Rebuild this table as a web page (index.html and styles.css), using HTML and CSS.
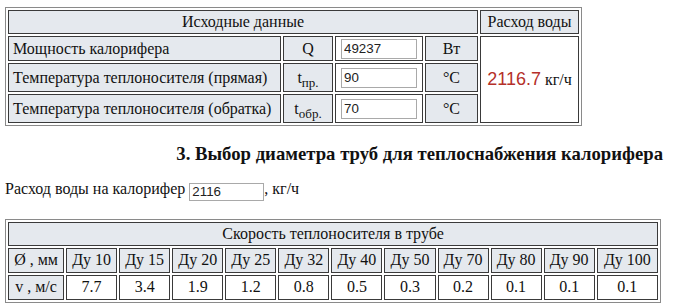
FILE: index.html
```html
<!DOCTYPE html>
<html lang="ru">
<head>
<meta charset="utf-8">
<title>Расчёт калорифера</title>
<link rel="stylesheet" href="styles.css">
</head>
<body>
<table class="calc">
  <colgroup>
    <col class="c-name"><col class="c-sym"><col class="c-inp"><col class="c-unit"><col class="c-res">
  </colgroup>
  <tr class="r-head">
    <td class="hd" colspan="4">Исходные данные</td>
    <td class="hd">Расход воды</td>
  </tr>
  <tr class="r1">
    <td class="hd left">Мощность калорифера</td>
    <td class="hd">Q</td>
    <td class="inpcell"><input class="fld" type="text" value="49237"></td>
    <td class="hd">Вт</td>
    <td class="res" rowspan="3"><span class="val">2116.7</span> кг/ч</td>
  </tr>
  <tr class="r2">
    <td class="hd left">Температура теплоносителя (прямая)</td>
    <td class="hd">t<sub>пр.</sub></td>
    <td class="inpcell"><input class="fld" type="text" value="90"></td>
    <td class="hd">°C</td>
  </tr>
  <tr class="r2">
    <td class="hd left">Температура теплоносителя (обратка)</td>
    <td class="hd">t<sub>обр.</sub></td>
    <td class="inpcell"><input class="fld" type="text" value="70"></td>
    <td class="hd">°C</td>
  </tr>
</table>

<h3 class="title">3. Выбор диаметра труб для теплоснабжения калорифера</h3>

<p class="flow">Расход воды на калорифер <input class="fld fld2" type="text" value="2116">, кг/ч</p>

<table class="speed">
  <colgroup>
    <col class="s-first">
    <col class="s-c"><col class="s-c"><col class="s-c"><col class="s-c"><col class="s-c"><col class="s-c"><col class="s-c"><col class="s-c"><col class="s-c"><col class="s-c">
    <col class="s-last">
  </colgroup>
  <tr class="sr-head">
    <td class="hd" colspan="12">Скорость теплоносителя в трубе</td>
  </tr>
  <tr class="sr">
    <td class="hd">Ø , мм</td>
    <td class="hd">Ду 10</td><td class="hd">Ду 15</td><td class="hd">Ду 20</td><td class="hd">Ду 25</td><td class="hd">Ду 32</td>
    <td class="hd">Ду 40</td><td class="hd">Ду 50</td><td class="hd">Ду 70</td><td class="hd">Ду 80</td><td class="hd">Ду 90</td><td class="hd">Ду 100</td>
  </tr>
  <tr class="sr">
    <td class="hd">v , м/с</td>
    <td>7.7</td><td>3.4</td><td>1.9</td><td>1.2</td><td>0.8</td>
    <td>0.5</td><td>0.3</td><td>0.2</td><td>0.1</td><td>0.1</td><td>0.1</td>
  </tr>
</table>
</body>
</html>
```

FILE: styles.css
```css
body {
  margin: 7px 0 0 5px;
  font-family: "Liberation Serif", "Times New Roman", serif;
  font-size: 16px;
  color: #111;
  background: #fff;
}

table {
  border-collapse: separate;
  border-spacing: 2px;
  border: 1px solid #8a8a8a;
  table-layout: fixed;
}

td {
  border: 1px solid #3a3a3a;
  padding: 0 4px;
  text-align: center;
  font-size: 16px;
  background: #fff;
}

td.hd {
  background: #e5e9ee;
}

td.left {
  text-align: left;
}

.calc {
  width: 577px;
}

.c-name { width: 273px; }
.c-sym { width: 50px; }
.c-inp { width: 88px; }
.c-unit { width: 53px; }
.c-res { width: 99px; }

.r-head td { height: 22px; }
.r1 td { height: 23px; }
.r2 td { height: 27px; }

sub {
  font-size: 13px;
  vertical-align: -4px;
  line-height: 0;
}

.inpcell {
  text-align: left;
  padding: 0 0 0 5px;
}

.fld {
  box-sizing: border-box;
  width: 76px;
  height: 20px;
  border: 1px solid #a9a9a9;
  padding: 0 2px;
  font-family: "Liberation Sans", Arial, sans-serif;
  font-size: 13.33px;
  color: #222;
  background: #fff;
  margin: 0;
  vertical-align: middle;
}

.res {
  font-size: 16px;
}

.val {
  font-family: "Liberation Sans", Arial, sans-serif;
  font-size: 18px;
  color: #b5302a;
}

.title {
  margin: 17px 14px 0 0;
  text-align: right;
  font-size: 18.72px;
  font-weight: bold;
  line-height: 22px;
}

.flow {
  margin: 14px 0 0 0;
  line-height: 20px;
}

.fld2 {
  width: 75px;
  height: 18px;
  vertical-align: -2px;
}

.speed {
  width: 656px;
  margin-top: 18px;
}

.s-first { width: 56px; }
.s-c { width: 51px; }
.s-last { width: 61px; }

.speed td { padding: 0 2px; }
.sr-head td { height: 22px; }
.sr td { height: 23px; }
```
